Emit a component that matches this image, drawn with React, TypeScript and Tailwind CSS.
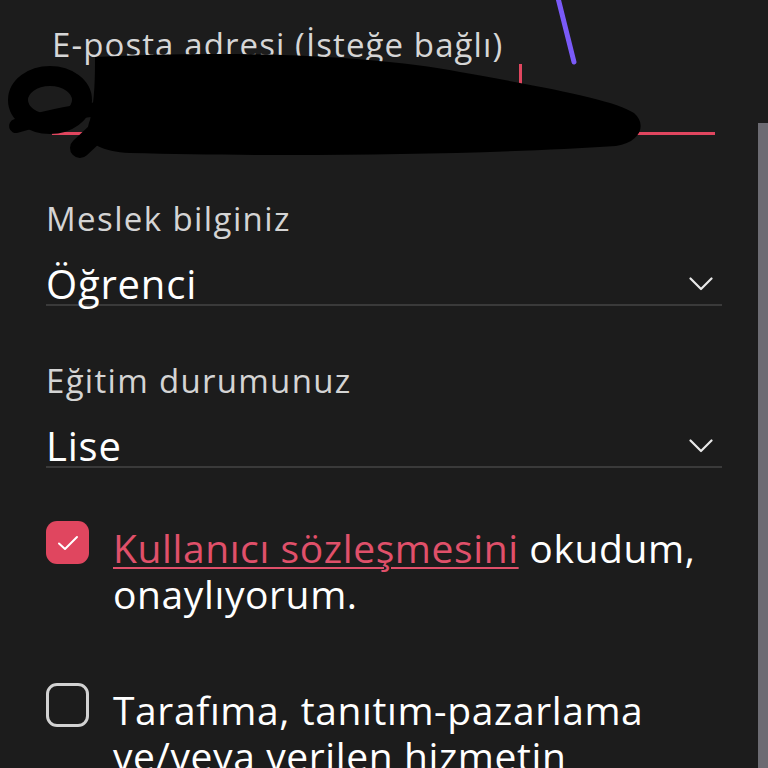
import React from "react";

const Chevron = () => (
  <svg width="24" height="14" viewBox="0 0 24 14" fill="none">
    <path d="M1.5 1.5 L12 12 L22.5 1.5" stroke="#e8e8e8" strokeWidth="2.2" strokeLinecap="round" strokeLinejoin="round" />
  </svg>
);

export default function App() {
  return (
    <div className="relative w-[768px] h-[768px] overflow-hidden bg-[#1c1c1c] flex" style={{ fontFamily: '"Open Sans", "Noto Sans", sans-serif' }}>
      <div className="flex-1 flex flex-col pl-[46px] pr-[36px]">
        {/* Email field */}
        <div className="pl-[6px] pr-[7px] pt-[27px]">
          <div className="text-[33px] leading-[36px] text-[#d6d6d6] tracking-[1.1px] whitespace-nowrap">E-posta adresi (İsteğe bağlı)</div>
          <div className="h-[72px] border-b-[3px] border-[#e0465f] flex items-start">
            <div className="ml-[467px] mt-[1px] w-[3px] h-[60px] bg-[#e0465f]" />
          </div>
        </div>

        {/* Meslek */}
        <div className="mt-[66px] text-[33px] leading-[36px] text-[#d4d4d4] tracking-[1.4px]">Meslek bilginiz</div>
        <div className="mt-[27px] flex items-center justify-between border-b-2 border-[#3a3a3a] pr-[9px]">
          <span className="text-[40px] leading-[40px] text-white tracking-[0.8px]">Öğrenci</span>
          <Chevron />
        </div>

        {/* Eğitim */}
        <div className="mt-[57px] text-[33px] leading-[36px] text-[#d4d4d4] tracking-[1.3px]">Eğitim durumunuz</div>
        <div className="mt-[27px] flex items-center justify-between border-b-2 border-[#3a3a3a] pr-[9px]">
          <span className="text-[40px] leading-[40px] text-white tracking-[0.8px]">Lise</span>
          <Chevron />
        </div>

        {/* Checkbox 1 */}
        <div className="mt-[53px] flex items-start gap-[24px]">
          <div className="w-[43px] h-[43px] shrink-0 rounded-[11px] bg-[#e0465f] flex items-center justify-center">
            <svg width="22" height="16" viewBox="0 0 22 16" fill="none">
              <path d="M2 8.5 L8 14 L20 2" stroke="white" strokeWidth="2" strokeLinecap="round" strokeLinejoin="round" />
            </svg>
          </div>
          <p className="mt-[4px] text-[39px] leading-[46px] text-white tracking-[0.6px]">
            <span className="text-[#e0506a] underline decoration-2 underline-offset-[4px]">Kullanıcı sözleşmesini</span> okudum, onaylıyorum.
          </p>
        </div>

        {/* Checkbox 2 */}
        <div className="mt-[66px] flex items-start gap-[24px]">
          <div className="w-[43px] h-[44px] shrink-0 rounded-[11px] border-[3px] border-[#d2d2d2]" />
          <p className="mt-[4px] text-[39px] leading-[46px] text-white tracking-[0.6px]">
            Tarafıma, tanıtım-pazarlama ve/veya verilen hizmetin kapsamında bilgilendirme yapılmasına izin veriyorum.
          </p>
        </div>
      </div>

      {/* scrollbar */}
      <div className="w-[10px] mt-[123px] bg-[#6c6b72]" />

      {/* overlays: redaction scribble and pen line */}
      <svg className="absolute left-0 top-0 pointer-events-none" width="768" height="200" viewBox="0 0 768 200">
        <path d="M95 57 C230 50 370 55 460 72 C550 88 615 100 634 113 C647 124 641 142 616 146 C480 155 280 157 130 153 C95 151 82 140 90 120 C95 100 95 75 95 57 Z" fill="#000" />
        <ellipse cx="50" cy="100" rx="32" ry="24" fill="none" stroke="#000" strokeWidth="20" />
        <path d="M16 126 C50 116 80 110 110 108" fill="none" stroke="#000" strokeWidth="14" strokeLinecap="round" />
        <path d="M80 148 L112 118" fill="none" stroke="#000" strokeWidth="20" strokeLinecap="round" />
        <line x1="558" y1="-2" x2="574" y2="62" stroke="#7a5af8" strokeWidth="5" strokeLinecap="round" />
      </svg>
    </div>
  );
}
